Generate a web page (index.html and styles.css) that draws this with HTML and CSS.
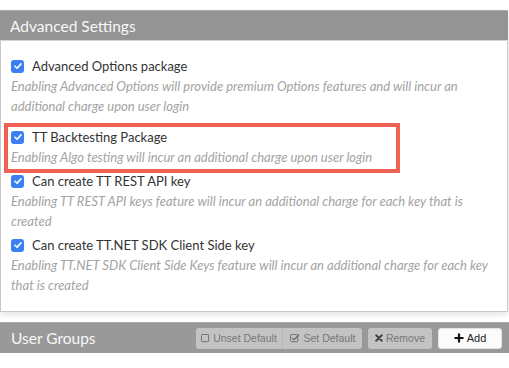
FILE: index.html
```html
<!DOCTYPE html>
<html>
<head>
<meta charset="utf-8">
<link rel="stylesheet" href="styles.css">
</head>
<body>
<div class="page">
  <section class="panel">
    <div class="panel-head">Advanced Settings</div>
    <div class="panel-body">
      <div class="item item-first">
        <div class="title"><span class="cb"><svg viewBox="0 0 12 12" width="12" height="12"><path d="M3 6.2 L5.1 8.3 L9 3.9" fill="none" stroke="#fff" stroke-width="1.6" stroke-linecap="round" stroke-linejoin="round"/></svg></span>Advanced Options package</div>
        <div class="desc">Enabling Advanced Options will provide premium Options features and will incur an additional charge upon user login</div>
      </div>
      <div class="item highlighted">
        <div class="title"><span class="cb"><svg viewBox="0 0 12 12" width="12" height="12"><path d="M3 6.2 L5.1 8.3 L9 3.9" fill="none" stroke="#fff" stroke-width="1.6" stroke-linecap="round" stroke-linejoin="round"/></svg></span>TT Backtesting Package</div>
        <div class="desc">Enabling Algo testing will incur an additional charge upon user login</div>
        <div class="redbox"></div>
      </div>
      <div class="item">
        <div class="title"><span class="cb"><svg viewBox="0 0 12 12" width="12" height="12"><path d="M3 6.2 L5.1 8.3 L9 3.9" fill="none" stroke="#fff" stroke-width="1.6" stroke-linecap="round" stroke-linejoin="round"/></svg></span>Can create TT REST API key</div>
        <div class="desc">Enabling TT REST API keys feature will incur an additional charge for each key that is created</div>
      </div>
      <div class="item">
        <div class="title"><span class="cb"><svg viewBox="0 0 12 12" width="12" height="12"><path d="M3 6.2 L5.1 8.3 L9 3.9" fill="none" stroke="#fff" stroke-width="1.6" stroke-linecap="round" stroke-linejoin="round"/></svg></span>Can create TT.NET SDK Client Side key</div>
        <div class="desc">Enabling TT.NET SDK Client Side Keys feature will incur an additional charge for each key that is created</div>
      </div>
    </div>
  </section>
  <section class="groups-head">
    <div class="groups-title">User Groups</div>
    <div class="actions">
      <div class="btn-group">
        <button class="btn btn-gray"><svg class="ic" viewBox="0 0 10 10" width="9" height="9"><rect x="0.5" y="0.5" width="8" height="8" rx="1" fill="none" stroke="#666" stroke-width="1"/></svg>Unset Default</button>
        <button class="btn btn-gray"><svg class="ic" viewBox="0 0 12 10" width="11" height="9"><rect x="0.5" y="0.5" width="8" height="8" rx="1" fill="none" stroke="#666" stroke-width="1"/><path d="M2.3 4.3 L4.3 6.3 L10 0.8" fill="none" stroke="#666" stroke-width="1.3"/></svg>Set Default</button>
      </div>
      <button class="btn btn-gray btn-single"><svg class="ic" viewBox="0 0 10 10" width="8" height="8"><path d="M1.5 1.5 L8.5 8.5 M8.5 1.5 L1.5 8.5" stroke="#444" stroke-width="2.4" stroke-linecap="round"/></svg>Remove</button>
      <button class="btn btn-white"><svg class="ic" viewBox="0 0 10 10" width="10" height="10"><path d="M5 0.5 V9.5 M0.5 5 H9.5" stroke="#111" stroke-width="2.2"/></svg>Add</button>
    </div>
  </section>
</div>
</body>
</html>
```
FILE: styles.css
```css
* { box-sizing: border-box; }
html, body { margin: 0; padding: 0; background: #fff; }
.page { padding-top: 10px; width: 509px; }
.panel {
  width: 508px;
  border: 1px solid #c8c8c8;
  border-top: none;
  background: #fff;
  box-shadow: 0 3px 6px rgba(0,0,0,0.10);
}
.panel-head {
  height: 31px;
  background: #949494;
  border-top: 1px solid #adadad;
  color: #f7f7f7;
  font-family: Lato, "Open Sans", sans-serif;
  font-size: 15.5px;
  line-height: 30px;
  padding-left: 10px;
  margin: 0 -1px;
  border-bottom: 1px solid #d4d4d4;
}
.panel-body {
  padding: 15px 10px 16px 10px;
  font-family: Lato, "Open Sans", sans-serif;
}
.item { position: relative; margin-bottom: 4px; }
.item:last-child { margin-bottom: 0; }
.item-first { margin-bottom: 11px; }
.title {
  display: flex;
  align-items: center;
  font-size: 13px;
  line-height: 20px;
  color: #333;
}
.cb {
  width: 13px;
  height: 13px;
  border-radius: 3px;
  background: #3a80f4;
  display: inline-flex;
  align-items: center;
  justify-content: center;
  margin-right: 8px;
  flex: none;
}
.desc {
  font-size: 13px;
  line-height: 20px;
  font-style: italic;
  color: #a3a3a3;
}
.redbox {
  position: absolute;
  left: -7px;
  top: -4px;
  width: 396px;
  height: 50px;
  border: 4px solid #ef6152;
  pointer-events: none;
}
.groups-head {
  margin-top: 10px;
  height: 31px;
  width: 509px;
  background: #999;
  border-top: 1px solid #aaa;
  display: flex;
  align-items: center;
  justify-content: space-between;
  padding: 0 7px 0 11px;
  box-shadow: 0 2px 3px rgba(0,0,0,0.08);
}
.groups-title {
  color: #f7f7f7;
  font-family: Lato, "Open Sans", sans-serif;
  font-size: 15.5px;
}
.actions { display: flex; gap: 6px; align-items: center; }
.btn-group { display: flex; }
.btn {
  height: 21px;
  border: none;
  font-family: "Liberation Sans", Arial, sans-serif;
  font-size: 10.5px;
  display: inline-flex;
  align-items: center;
  justify-content: center;
  gap: 3px;
  padding: 0;
  cursor: default;
}
.btn-gray { background: #c3c3c3; color: #777; }
.btn-group .btn:first-child { width: 87px; border-radius: 3px 0 0 3px; border-right: 1px solid #b7b7b7; }
.btn-group .btn:last-child { width: 79px; border-radius: 0 3px 3px 0; }
.btn-single { width: 64px; border-radius: 3px; }
.btn-white { width: 64px; border-radius: 3px; background: #fbfbfb; color: #222; border: 1px solid #e2e2e2; font-size: 11px; }
.ic { flex: none; }
```
